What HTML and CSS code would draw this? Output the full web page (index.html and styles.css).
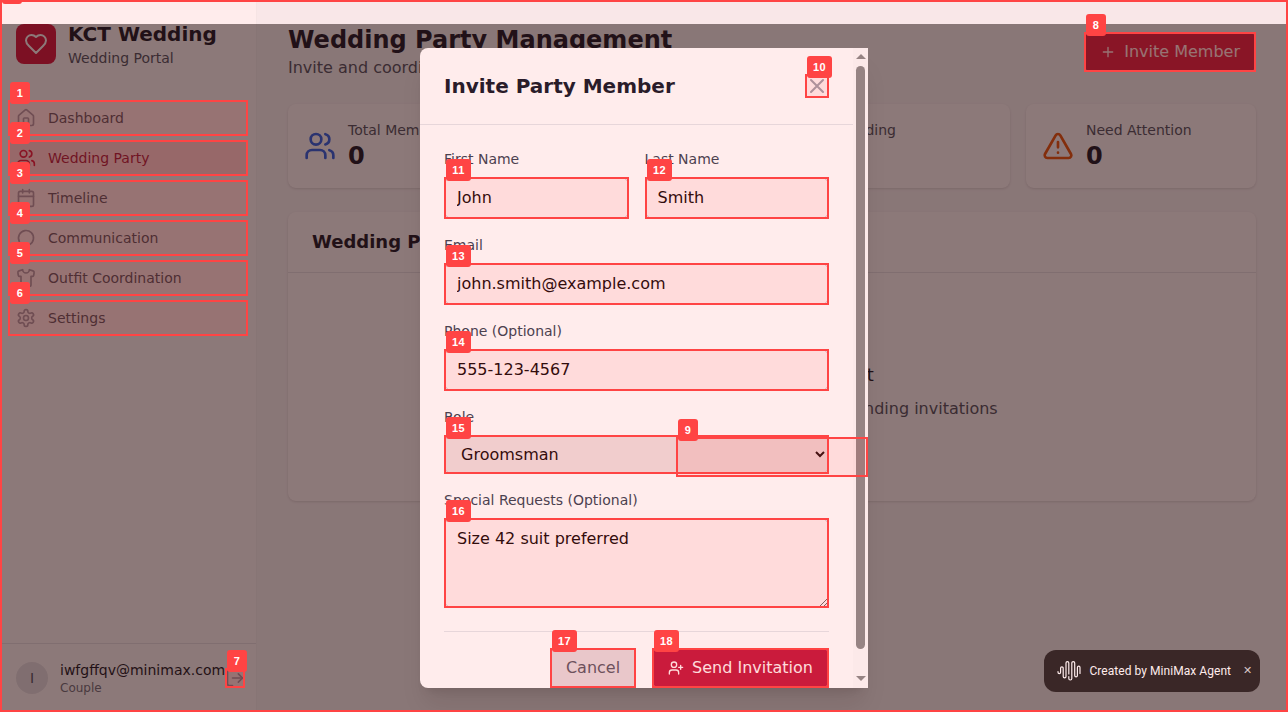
FILE: index.html
```html
<!DOCTYPE html>
<html lang="en">
<head>
<meta charset="utf-8">
<title>KCT Wedding – Wedding Party Management</title>
<link rel="stylesheet" href="styles.css">
</head>
<body>
<svg class="sprite" aria-hidden="true">
  <symbol id="users" viewBox="0 0 24 24"><path d="M16 21v-2a4 4 0 0 0-4-4H6a4 4 0 0 0-4 4v2"/><circle cx="9" cy="7" r="4"/><path d="M22 21v-2a4 4 0 0 0-3-3.87"/><path d="M16 3.13a4 4 0 0 1 0 7.75"/></symbol>
</svg>
<div class="app">
  <aside class="sidebar">
    <div class="brand">
      <div class="brand-mark"><svg class="icon s24" viewBox="0 0 24 24"><path d="M19 14c1.49-1.46 3-3.21 3-5.5A5.5 5.5 0 0 0 16.5 3c-1.76 0-3 .5-4.5 2-1.5-1.5-2.74-2-4.5-2A5.5 5.5 0 0 0 2 8.5c0 2.3 1.5 4.05 3 5.5l7 7Z"/></svg></div>
      <div><div class="brand-name">KCT Wedding</div><div class="brand-sub">Wedding Portal</div></div>
    </div>
    <nav class="nav">
      <a class="nav-item"><svg class="icon s20" viewBox="0 0 24 24"><path d="M15 21v-8a1 1 0 0 0-1-1h-4a1 1 0 0 0-1 1v8"/><path d="M3 10a2 2 0 0 1 .709-1.528l7-5.999a2 2 0 0 1 2.582 0l7 5.999A2 2 0 0 1 21 10v9a2 2 0 0 1-2 2H5a2 2 0 0 1-2-2z"/></svg><span>Dashboard</span></a>
      <a class="nav-item active"><svg class="icon s20"><use href="#users"/></svg><span>Wedding Party</span></a>
      <a class="nav-item"><svg class="icon s20" viewBox="0 0 24 24"><path d="M8 2v4M16 2v4M3 10h18"/><rect x="3" y="4" width="18" height="18" rx="2"/></svg><span>Timeline</span></a>
      <a class="nav-item"><svg class="icon s20" viewBox="0 0 24 24"><path d="M7.9 20A9 9 0 1 0 4 16.1L2 22Z"/></svg><span>Communication</span></a>
      <a class="nav-item"><svg class="icon s20" viewBox="0 0 24 24"><path d="M20.38 3.46 16 2a4 4 0 0 1-8 0L3.62 3.46a2 2 0 0 0-1.34 2.23l.58 3.47a1 1 0 0 0 .99.84H6v10c0 1.1.9 2 2 2h8a2 2 0 0 0 2-2V10h2.15a1 1 0 0 0 .99-.84l.58-3.47a2 2 0 0 0-1.34-2.23z"/></svg><span>Outfit Coordination</span></a>
      <a class="nav-item"><svg class="icon s20" viewBox="0 0 24 24"><path d="M12.22 2h-.44a2 2 0 0 0-2 2v.18a2 2 0 0 1-1 1.73l-.43.25a2 2 0 0 1-2 0l-.15-.08a2 2 0 0 0-2.73.73l-.22.38a2 2 0 0 0 .73 2.73l.15.1a2 2 0 0 1 1 1.72v.51a2 2 0 0 1-1 1.74l-.15.09a2 2 0 0 0-.73 2.73l.22.38a2 2 0 0 0 2.73.73l.15-.08a2 2 0 0 1 2 0l.43.25a2 2 0 0 1 1 1.73V20a2 2 0 0 0 2 2h.44a2 2 0 0 0 2-2v-.18a2 2 0 0 1 1-1.73l.43-.25a2 2 0 0 1 2 0l.15.08a2 2 0 0 0 2.73-.73l.22-.39a2 2 0 0 0-.73-2.73l-.15-.08a2 2 0 0 1-1-1.74v-.5a2 2 0 0 1 1-1.74l.15-.09a2 2 0 0 0 .73-2.73l-.22-.38a2 2 0 0 0-2.73-.73l-.15.08a2 2 0 0 1-2 0l-.43-.25a2 2 0 0 1-1-1.73V4a2 2 0 0 0-2-2z"/><circle cx="12" cy="12" r="3"/></svg><span>Settings</span></a>
    </nav>
    <div class="account">
      <div class="avatar">I</div>
      <div class="account-text"><div class="account-mail">iwfgffqv@minimax.com</div><div class="account-role">Couple</div></div>
      <svg class="icon s20 logout" viewBox="0 0 24 24"><path d="M9 21H5a2 2 0 0 1-2-2V5a2 2 0 0 1 2-2h4"/><path d="m16 17 5-5-5-5"/><path d="M21 12H9"/></svg>
    </div>
  </aside>
  <main class="main">
    <header class="page-head">
      <div><h1>Wedding Party Management</h1><p>Invite and coordinate your wedding party</p></div>
      <button class="btn invite"><svg class="icon s16" viewBox="0 0 24 24"><path d="M5 12h14M12 5v14"/></svg>Invite Member</button>
    </header>
    <section class="stats">
      <div class="card stat"><svg class="icon s32 blue"><use href="#users"/></svg><div><div class="stat-label">Total Members</div><div class="stat-value">0</div></div></div>
      <div class="card stat"><svg class="icon s32 green" viewBox="0 0 24 24"><circle cx="12" cy="12" r="10"/><path d="m9 12 2 2 4-4"/></svg><div><div class="stat-label">Accepted</div><div class="stat-value">0</div></div></div>
      <div class="card stat"><svg class="icon s32 amber" viewBox="0 0 24 24"><circle cx="12" cy="12" r="10"/><path d="M12 6v6l4 2"/></svg><div><div class="stat-label">Pending</div><div class="stat-value">0</div></div></div>
      <div class="card stat"><svg class="icon s32 orange" viewBox="0 0 24 24"><path d="m21.73 18-8-14a2 2 0 0 0-3.48 0l-8 14A2 2 0 0 0 4 21h16a2 2 0 0 0 1.73-3"/><path d="M12 9v4M12 17h.01"/></svg><div><div class="stat-label">Need Attention</div><div class="stat-value">0</div></div></div>
    </section>
    <section class="card members">
      <h2>Wedding Party Members</h2>
      <div class="empty"><h3>No party members yet</h3><p>Start building your wedding party by sending invitations</p></div>
    </section>
  </main>
</div>

<div class="backdrop">
  <div class="modal">
    <div class="modal-scroll">
      <div class="modal-head"><h2>Invite Party Member</h2><svg class="icon s24 close" viewBox="0 0 24 24"><path d="M18 6 6 18M6 6l12 12"/></svg></div>
      <form class="form">
        <div class="pair">
          <label class="field"><span>First Name</span><input class="control" value="John"></label>
          <label class="field"><span>Last Name</span><input class="control" value="Smith"></label>
        </div>
        <label class="field"><span>Email</span><input class="control" value="john.smith@example.com"></label>
        <label class="field"><span>Phone (Optional)</span><input class="control" value="555-123-4567"></label>
        <label class="field"><span>Role</span><select class="control select"><option>Groomsman</option></select></label>
        <label class="field"><span>Special Requests (Optional)</span><textarea class="control area">Size 42 suit preferred</textarea></label>
        <div class="actions">
          <button type="button" class="btn cancel">Cancel</button>
          <button type="button" class="btn send"><svg class="icon s16" viewBox="0 0 24 24"><path d="M16 21v-2a4 4 0 0 0-4-4H6a4 4 0 0 0-4 4v2"/><circle cx="9" cy="7" r="4"/><path d="M19 8v6M22 11h-6"/></svg>Send Invitation</button>
        </div>
      </form>
    </div>
    <div class="scrollbar"><i class="arrow up"></i><i class="thumb"></i><i class="arrow down"></i></div>
  </div>
</div>

<div class="agent">
  <svg class="wave" viewBox="0 0 26 22"><path d="M1 11.500v.8a1.300 1.300 0 0 0 2.600 0V8.200a1.300 1.300 0 0 1 2.600 0V16.500a1.400 1.400 0 0 0 2.800 0V3a1.400 1.400 0 0 1 2.800 0V14M11.800 16.500v2a1.400 1.400 0 0 0 3 0V3a1.400 1.400 0 0 1 2.900 0V15.500a1.300 1.300 0 0 0 2.700 0V7.500a1.300 1.300 0 0 1 2.600 0V13.500"/></svg>
  <span class="agent-text">Created by MiniMax Agent</span><span class="agent-x">✕</span>
</div>

<div class="marks">
  <div class="mark root" style="left:0;top:0;width:1288px;height:712px"><b>0</b></div>
  <div class="mark" style="left:8px;top:100px;width:240px;height:36px"><b>1</b></div>
  <div class="mark" style="left:8px;top:140px;width:240px;height:36px"><b>2</b></div>
  <div class="mark" style="left:8px;top:180px;width:240px;height:36px"><b>3</b></div>
  <div class="mark" style="left:8px;top:220px;width:240px;height:36px"><b>4</b></div>
  <div class="mark" style="left:8px;top:260px;width:240px;height:36px"><b>5</b></div>
  <div class="mark" style="left:8px;top:300px;width:240px;height:36px"><b>6</b></div>
  <div class="mark" style="left:225px;top:668px;width:20px;height:20px"><b>7</b></div>
  <div class="mark" style="left:1084px;top:32px;width:172px;height:40px"><b>8</b></div>
  <div class="mark" style="left:676px;top:437px;width:192px;height:40px"><b>9</b></div>
  <div class="mark two" style="left:805px;top:74px;width:24px;height:24px"><b>10</b></div>
  <div class="mark two" style="left:444px;top:177px;width:185px;height:42px"><b>11</b></div>
  <div class="mark two" style="left:645px;top:177px;width:184px;height:42px"><b>12</b></div>
  <div class="mark two" style="left:444px;top:263px;width:385px;height:42px"><b>13</b></div>
  <div class="mark two" style="left:444px;top:349px;width:385px;height:42px"><b>14</b></div>
  <div class="mark two" style="left:444px;top:435px;width:385px;height:39px"><b>15</b></div>
  <div class="mark two" style="left:444px;top:518px;width:385px;height:90px"><b>16</b></div>
  <div class="mark two" style="left:550px;top:648px;width:86px;height:40px"><b>17</b></div>
  <div class="mark two" style="left:652px;top:648px;width:177px;height:40px"><b>18</b></div>
</div>
</body>
</html>
```
FILE: styles.css
```css
*, *::before, *::after { box-sizing: border-box; }
body { margin: 0; height: 712px; overflow: hidden; position: relative; font: 16px/24px "DejaVu Sans", sans-serif; color: #111827; }
h1, h2, h3, p { margin: 0; }
button { font: inherit; border: 0; margin: 0; }
.sprite { position: absolute; width: 0; height: 0; }
.icon { fill: none; stroke: currentColor; stroke-width: 2; stroke-linecap: round; stroke-linejoin: round; flex: none; display: block; }
.s16 { width: 16px; height: 16px; }
.s20 { width: 20px; height: 20px; }
.s24 { width: 24px; height: 24px; }
.s32 { width: 32px; height: 32px; }

.app { display: flex; height: 712px; background: #f9fafb; }
.sidebar { width: 256px; flex: none; background: #fff; display: flex; flex-direction: column; box-shadow: 0 1px 2px rgba(0,0,0,.05); }
.brand { display: flex; align-items: center; gap: 12px; padding: 20px 16px; height: 88px; }
.brand-mark { width: 40px; height: 40px; border-radius: 8px; background: #dc1640; color: #fff; display: flex; align-items: center; justify-content: center; }
.brand-name { font-size: 20px; line-height: 28px; font-weight: 700; }
.brand-sub { font-size: 14px; line-height: 20px; color: #4b5563; }
.nav { flex: 1; display: flex; flex-direction: column; gap: 4px; padding: 12px 8px; }
.nav-item { display: flex; align-items: center; gap: 12px; height: 36px; padding: 0 8px; border-radius: 6px; font-size: 14px; line-height: 20px; color: #4b5563; }
.nav-item .icon { color: #9ca3af; }
.nav-item.active { background: #ffe4e6; color: #9f1239; }
.nav-item.active .icon { color: #dc143c; }
.account { display: flex; align-items: center; height: 69px; padding: 0 16px; border-top: 1px solid #e5e7eb; }
.avatar { width: 32px; height: 32px; border-radius: 50%; background: #e5e7eb; color: #4b5563; font-size: 14px; display: flex; align-items: center; justify-content: center; flex: none; }
.account-text { margin-left: 12px; flex: none; width: 165px; white-space: nowrap; }
.account-mail { font-size: 14px; line-height: 20px; }
.account-role { font-size: 12px; line-height: 16px; color: #6b7280; }
.logout { color: #9ca3af; }

.main { flex: 1; padding: 24px 32px; display: flex; flex-direction: column; gap: 24px; }
.page-head { display: flex; justify-content: space-between; align-items: center; height: 56px; }
.page-head h1 { font-size: 24px; line-height: 32px; }
.page-head p { color: #4b5563; }
.btn { display: flex; align-items: center; gap: 8px; height: 40px; padding: 0 16px; border-radius: 8px; color: #fff; white-space: nowrap; }
.invite { background: #dc1640; }
.card { background: #fff; border-radius: 8px; box-shadow: 0 1px 3px rgba(0,0,0,.1), 0 1px 2px -1px rgba(0,0,0,.1); }
.stats { display: grid; grid-template-columns: repeat(4, 1fr); gap: 16px; }
.stat { display: flex; align-items: center; gap: 12px; padding: 16px; height: 84px; }
.stat-label { font-size: 14px; line-height: 20px; color: #4b5563; }
.stat-value { font-size: 24px; line-height: 32px; font-weight: 700; }
.blue { color: #2563eb; }
.green { color: #16a34a; }
.amber { color: #ca8a04; }
.orange { color: #ea580c; }
.members { height: 289px; }
.members h2 { font-size: 18px; line-height: 28px; padding: 16px 24px; border-bottom: 1px solid #e5e7eb; }
.empty { display: flex; flex-direction: column; align-items: center; gap: 8px; padding-top: 88px; }
.empty h3 { font-size: 18px; line-height: 28px; font-weight: 400; }
.empty p { color: #4b5563; }

.backdrop { position: absolute; inset: 24px 0 0; background: rgba(0,0,0,.5); display: flex; align-items: center; justify-content: center; }
.modal { width: 448px; height: 640px; display: flex; background: #fff; overflow: hidden; border-radius: 8px 0 0 8px; box-shadow: 0 20px 25px -5px rgba(0,0,0,.1), 0 8px 10px -6px rgba(0,0,0,.1); }
.modal-scroll { width: 433px; flex: none; overflow: hidden; }
.modal-head { display: flex; align-items: center; justify-content: space-between; height: 77px; padding: 0 24px; border-bottom: 1px solid #e5e7eb; }
.modal-head h2 { font-size: 20px; line-height: 28px; }
.close { color: #9ca3af; }
.form { display: flex; flex-direction: column; gap: 16px; padding: 24px; }
.pair { display: grid; grid-template-columns: 1fr 1fr; gap: 16px; }
.field { display: flex; flex-direction: column; gap: 8px; min-width: 0; }
.field > span { font-size: 14px; line-height: 20px; color: #374151; }
.control { width: 100%; height: 42px; margin: 0; padding: 7px 12px 9px; border: 1px solid #d1d5db; border-radius: 8px; background: #fff; color: #000; font: inherit; line-height: 24px; }
.select { height: 39px; background: #efefef; padding: 0 0 0 12px; }
.area { height: 90px; padding: 8px 12px; resize: vertical; }
.actions { display: flex; justify-content: flex-end; gap: 16px; margin-top: 7px; border-top: 1px solid #e5e7eb; padding-top: 16px; }
.cancel { background: #e5e7eb; color: #4b5563; }
.send { background: #be123a; }
.scrollbar { width: 15px; background: #fcfcfc; display: flex; flex-direction: column; align-items: center; }
.arrow { border: 5px solid transparent; width: 0; height: 0; flex: none; }
.up { border-top: 0; border-bottom-color: #8b8b8b; margin: 6px 0 7px; }
.thumb { width: 9px; height: 583px; border-radius: 5px; background: #8b8b8b; flex: none; }
.down { border-bottom: 0; border-top-color: #8b8b8b; margin-top: 27px; }

.agent { position: absolute; right: 28px; bottom: 20px; width: 216px; height: 42px; border-radius: 12px; background: #242424; color: #fff; display: flex; align-items: center; padding: 0 8px 0 13px; font: 400 12px/18px Roboto, sans-serif; white-space: nowrap; }
.wave { width: 26px; height: 22px; flex: none; margin-right: 6.500px; fill: none; stroke: #fff; stroke-width: 1.2; stroke-linecap: round; }
.agent-text { letter-spacing: .05px; }
.agent-x { width: 10px; text-align: center; margin-left: auto; font-size: 11px; color: #d4d4d4; }

/* Numbered element markers layered over the whole page */
.marks { position: absolute; inset: 0; overflow: hidden; }
.mark { position: absolute; border: 2px solid #ff4444; background: rgba(255,68,68,.1); }
.mark b { position: absolute; left: 0; top: -20px; width: 20px; height: 22px; border-radius: 3px; background: #ff4444; color: #fff; font: 700 11px/22px "Liberation Sans", sans-serif; letter-spacing: .4px; text-align: center; }
.mark.two b { width: 25px; }
```
